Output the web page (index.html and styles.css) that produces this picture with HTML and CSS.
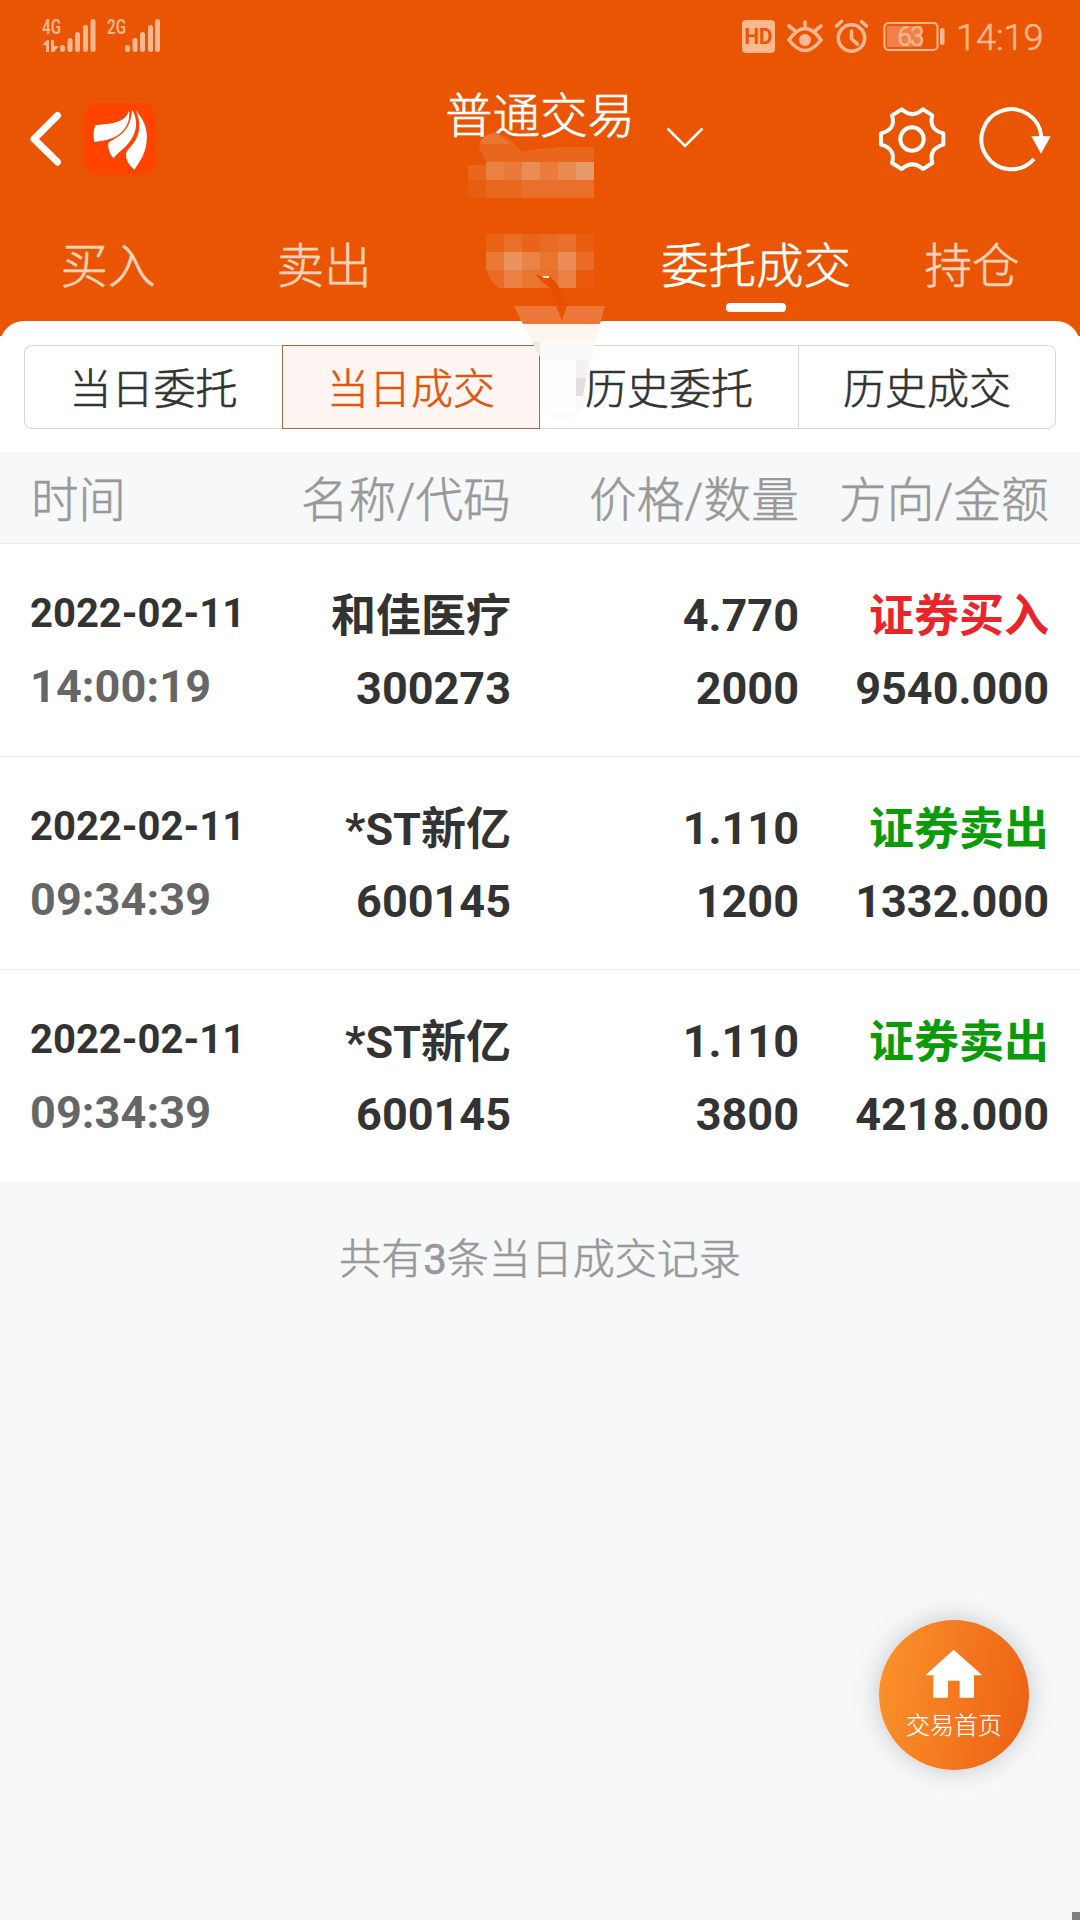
FILE: index.html
```html
<!DOCTYPE html>
<html lang="zh-CN">
<head>
    <meta charset="UTF-8">
    <meta name="viewport" content="width=device-width, initial-scale=1.0">
    <title>普通交易 - 当日成交</title>
    <link rel="stylesheet" href="styles.css">
</head>
<body>
    <header class="header">
        <!-- Status Bar -->
        <div class="status-bar">
            <svg class="signals" width="125" height="40" viewBox="40 16 125 40">
                <text x="42" y="33.5" textLength="19" lengthAdjust="spacingAndGlyphs">4G</text>
                <text x="107" y="33.5" textLength="19" lengthAdjust="spacingAndGlyphs">2G</text>
                <path d="M42 45l5-5h2v12h-3v-7zM51 40h3v6h5l-5 6h-3z"/>
                <g class="bars">
                    <path d="M62.5 47.5v2M70 40.5v9M77.5 34.5v15M85.5 27.5v22M93 21.5v28"/>
                    <path d="M127.5 47.5v2M135 40.5v9M142.5 34.5v15M150.5 27.5v22M157.5 21.5v28"/>
                </g>
            </svg>
            <div class="status-right">
                <svg width="206" height="40" viewBox="741 16 206 40">
                    <rect class="solid" x="742" y="20" width="33" height="33" rx="4"/>
                    <text class="hd" x="744.5" y="44" textLength="28" lengthAdjust="spacingAndGlyphs">HD</text>
                    <g class="line">
                        <path d="M789 40q16-23 32 0q-16 21-32 0zM805 27v-5M794 30l-5-4M816 30l5-4"/>
                        <circle cx="851.5" cy="38" r="13.2"/>
                        <path d="M851.5 31v8l6 5M836.5 26l5-4.5M861.5 21.5l5 4.5"/>
                    </g>
                    <circle class="solid" cx="805" cy="40" r="6"/>
                    <rect class="charge" x="887" y="26" width="35" height="21"/>
                    <rect class="shell" x="884.5" y="23" width="53" height="27" rx="4"/>
                    <rect class="solid" x="940" y="28" width="4.5" height="17" rx="2"/>
                    <text class="level" x="897" y="45.5" textLength="28">63</text>
                </svg>
                <span class="clock">14:19</span>
            </div>
        </div>

        <!-- Title Bar -->
        <div class="title-bar">
            <div class="title-left">
                <svg width="32" height="56" viewBox="30 111 32 56" fill="none" stroke="#fff" stroke-width="7" stroke-linecap="round" stroke-linejoin="round">
                    <path d="M57.5 115.5L34 139L57.5 162"/>
                </svg>
                <svg class="logo" width="72" height="72" viewBox="252 309 216 216">
                    <rect x="252" y="309" width="216" height="216" rx="42" fill="#ff4400"/>
                    <g fill="#fff">
                        <path d="M387 332C380 354 364 363 340 369C322 373 304 373 286 376Q277 398 283 426C310 423 336 417 354 405C380 386 391 362 387 332z"/>
                        <path d="M396 329C394 366 382 389 357 408C346 416 335 421 325 428Q322 452 340 475C350 461 363 453 376 440C407 409 420 370 396 329z"/>
                        <path d="M408 332C424 368 421 403 399 432C390 442 381 450 378 460Q376 488 403 509C418 487 430 471 437 442C448 396 434 360 408 332z"/>
                    </g>
                </svg>
            </div>
            <h1 class="title">普通交易</h1>
            <div class="title-right">
                <svg class="chevron" width="40" height="24" viewBox="664 126 40 24" fill="none" stroke="#fff" stroke-width="2.6">
                    <path d="M666.5 128.5L684 146L701.5 128.5"/>
                </svg>
                <svg width="68" height="68" viewBox="529 314 204 204" fill="none" stroke="#fff" stroke-width="12" stroke-linejoin="round">
                    <path d="M600 327Q632 356 664 327L692 345Q680 388 725 399V433Q680 446 692 488L664 506Q632 478 600 506L571 488Q584 446 538 433V399Q584 388 571 345Z"/>
                    <circle cx="631" cy="416" r="35"/>
                </svg>
                <svg width="74" height="68" viewBox="832 314 222 204">
                    <path d="M1000 476A90 90 0 1 1 1022 410" fill="none" stroke="#fff" stroke-width="12"/>
                    <path d="M992 408h58l-29 52z" fill="#fff"/>
                </svg>
            </div>
        </div>

        <!-- Main Tabs -->
        <nav class="tabs">
            <a class="tab">买入</a>
            <a class="tab">卖出</a>
            <a class="tab"></a>
            <a class="tab active">委托成交</a>
            <a class="tab">持仓</a>
        </nav>
    </header>

    <!-- Sub Tabs -->
    <section class="panel">
        <div class="segments">
            <a class="segment">当日委托</a>
            <a class="segment selected">当日成交</a>
            <a class="segment">历史委托</a>
            <a class="segment">历史成交</a>
        </div>
    </section>

    <!-- Trade Records -->
    <main class="records">
        <div class="row row-head">
            <span>时间</span>
            <span>名称/代码</span>
            <span>价格/数量</span>
            <span>方向/金额</span>
        </div>
        <div class="row">
            <div class="cell"><span class="date">2022-02-11</span><span class="time">14:00:19</span></div>
            <div class="cell"><span class="name">和佳医疗</span><span>300273</span></div>
            <div class="cell"><span>4.770</span><span>2000</span></div>
            <div class="cell"><span class="name buy">证券买入</span><span>9540.000</span></div>
        </div>
        <div class="row">
            <div class="cell"><span class="date">2022-02-11</span><span class="time">09:34:39</span></div>
            <div class="cell"><span class="name">*ST新亿</span><span>600145</span></div>
            <div class="cell"><span>1.110</span><span>1200</span></div>
            <div class="cell"><span class="name sell">证券卖出</span><span>1332.000</span></div>
        </div>
        <div class="row">
            <div class="cell"><span class="date">2022-02-11</span><span class="time">09:34:39</span></div>
            <div class="cell"><span class="name">*ST新亿</span><span>600145</span></div>
            <div class="cell"><span>1.110</span><span>3800</span></div>
            <div class="cell"><span class="name sell">证券卖出</span><span>4218.000</span></div>
        </div>
    </main>
    <p class="summary">共有<b>3</b>条当日成交记录</p>

    <!-- Masked account info -->
    <svg class="mask" width="160" height="290" viewBox="460 130 160 290" shape-rendering="crispEdges">
        <path fill="#e9661f" d="M479 147q3-14 17-14q12 2 26 19q24-6 72-5v15H486z"/>
        <path fill="#eb7535" d="M479 144q4-10 17-11l14 11z"/>
        <g>
            <rect x="468" y="165" width="18" height="15" fill="#e9661d"/>
            <rect x="486" y="162" width="18" height="18" fill="#ea8143"/>
            <rect x="504" y="162" width="18" height="18" fill="#e97a3a"/>
            <rect x="522" y="162" width="18" height="18" fill="#e98d56"/>
            <rect x="540" y="162" width="18" height="18" fill="#e97c3d"/>
            <rect x="558" y="162" width="18" height="18" fill="#e88b50"/>
            <rect x="576" y="162" width="18" height="18" fill="#e69a6a"/>
            <rect x="468" y="180" width="18" height="18" fill="#e95d12"/>
            <rect x="486" y="180" width="36" height="18" fill="#e9681f"/>
            <rect x="522" y="180" width="72" height="18" fill="#e96f2b"/>
        </g>
        <g>
            <rect x="486" y="234" width="18" height="18" fill="#e96216"/>
            <rect x="504" y="234" width="18" height="18" fill="#e97029"/>
            <rect x="522" y="234" width="18" height="18" fill="#e96418"/>
            <rect x="540" y="234" width="18" height="18" fill="#e96c24"/>
            <rect x="558" y="234" width="18" height="18" fill="#e9712c"/>
            <rect x="576" y="234" width="18" height="18" fill="#e95d12"/>
            <rect x="486" y="252" width="18" height="18" fill="#ea7935"/>
            <rect x="504" y="252" width="18" height="18" fill="#ea935c"/>
            <rect x="522" y="252" width="18" height="18" fill="#e98348"/>
            <rect x="540" y="252" width="18" height="18" fill="#e9762f"/>
            <rect x="558" y="252" width="18" height="18" fill="#ea8d58"/>
            <rect x="576" y="252" width="18" height="18" fill="#e96b26"/>
            <path d="M487 270h17v18h-5q-9-6-12-18z" fill="#e96b25"/>
            <rect x="504" y="270" width="18" height="18" fill="#ea8143"/>
            <rect x="522" y="270" width="18" height="18" fill="#e9752f"/>
            <rect x="540" y="270" width="18" height="18" fill="#e9702a"/>
            <rect x="558" y="270" width="18" height="18" fill="#ea8144"/>
            <rect x="576" y="270" width="18" height="18" fill="#e95a0c"/>
            <path d="M536 275l14 2q14 12 17 29h-9q-3-16-18-26z" fill="#e85000"/>
            <path d="M542 276h7v2h-6z" fill="#fbe0cd"/>
        </g>
        <path fill="#eb7839" d="M514 306h42l6 15l5-15h38l-5 18h-77z"/>
        <path fill="#fcf5f0" d="M523 324h77l-4 18h-64z"/>
        <path fill="#f3e7df" d="M532 342h8v15z"/>
        <path fill="#fafafa" d="M540 342h55l-10 57q-5 18-16 18h-12q-9 0-17-10z"/>
        <path fill="#fdfdfd" d="M540 360h36v52h-30l-6-6z"/>
        <path fill="#f1f1f1" d="M576 360h13l-3 18h-10z"/>
        <path fill="#e0e0e0" d="M576 378h10l-3 18h-7z"/>
    </svg>

    <!-- Floating Home Button -->
    <a class="home-button">
        <svg width="58" height="50" viewBox="254 208 174 150">
            <path d="M340 210L426 287H401V354H358V303H323V354H279V287H255Z" fill="#fff"/>
        </svg>
        <span>交易首页</span>
    </a>
    <div class="corner"></div>
</body>
</html>
```
FILE: styles.css
```css
/* Base Styles */
* {
    box-sizing: border-box;
}

body {
    margin: 0;
    position: relative;
    height: 1920px;
    overflow: hidden;
    font-family: Roboto, "Noto Sans CJK SC", sans-serif;
    font-weight: 300;
    -webkit-text-stroke: 0.6px currentColor;
    color: #333;
    background-color: #f7f8fa;
}

svg {
    display: block;
    flex: none;
}

svg text {
    -webkit-text-stroke: 0;
}

/* Header */
.header {
    height: 336px;
    background-color: #ea5504;
    color: #fff;
}

.status-bar {
    display: flex;
    justify-content: space-between;
    height: 72px;
    padding: 16px 36px 0 40px;
}

.status-bar svg {
    fill: #ffb78f;
}

.signals text {
    font-size: 20.5px;
    font-weight: 600;
}

.bars {
    stroke: #ffb78f;
    stroke-width: 5;
    stroke-linecap: round;
}

.status-right {
    display: flex;
    gap: 9px;
}

.status-bar .hd {
    fill: #ea5504;
    font-size: 22px;
    font-weight: 700;
}

.line {
    fill: none;
    stroke: #ffb78f;
    stroke-width: 3.6;
    stroke-linecap: round;
}

.charge {
    fill: #f08249;
}

.shell {
    fill: none;
    stroke: #ffb78f;
    stroke-width: 2;
}

.level {
    font-size: 27px;
    font-weight: 400;
}

.clock {
    width: 88px;
    font-size: 36px;
    line-height: 44px;
    color: #ffb78f;
    white-space: nowrap;
}

/* Title Bar */
.title-bar {
    display: grid;
    grid-template-columns: 1fr 192px 1fr;
    height: 134px;
    padding: 0 28px 0 30px;
}

.title-left,
.title-right {
    display: flex;
    align-items: center;
}

.logo {
    margin-left: 22px;
}

.title {
    margin: 10px 0 0 -2px;
    font-size: 47.5px;
    font-weight: 300;
    line-height: 70px;
    text-align: center;
}

.title-right {
    justify-content: flex-end;
    gap: 32px;
}

.chevron {
    margin: -2px 141px 0 0;
}

/* Main Tabs */
.tabs {
    display: flex;
    height: 115px;
}

.tab {
    display: flex;
    flex: 1;
    flex-direction: column;
    align-items: center;
    padding-top: 26px;
    font-size: 47.5px;
    line-height: 70px;
    color: #ffd3b8;
    white-space: nowrap;
}

.tab.active {
    color: #fff;
}

.tab.active::after {
    content: "";
    width: 60px;
    height: 9px;
    margin-top: 1px;
    border-radius: 4px;
    background-color: #fff;
}

/* Sub Tabs */
.panel {
    height: 131px;
    margin-top: -15px;
    padding: 24px 24px 0;
    border-radius: 24px 24px 0 0;
    background-color: #fff;
}

.segments {
    display: grid;
    grid-template-columns: repeat(4, 1fr);
    grid-template-rows: 84px;
}

.segment {
    border: 1px solid #d5d7d9;
    font-size: 42px;
    line-height: 87px;
    text-align: center;
}

.segment:first-child {
    border-radius: 8px 0 0 8px;
    border-right: 0;
}

.segment:last-child {
    border-radius: 0 8px 8px 0;
}

.segment:nth-child(3) {
    border-left: 0;
    border-right: 0;
}

.segment.selected {
    border-color: #a96a40;
    color: #dc5712;
    background-color: #fff6f3;
}

/* Trade Records */
.row {
    display: grid;
    grid-template-columns: 230px 250px 288px 250px;
    height: 213px;
    padding: 35px 30px 0 31px;
    border-top: 1px solid #ebebeb;
    text-align: right;
    background-color: #fff;
}

.row-head {
    height: 91px;
    padding-top: 12px;
    border-top: 0;
    font-size: 47.5px;
    line-height: 74px;
    color: #999;
    background-color: #f7f8fa;
}

.row-head > :nth-child(n+2) {
    letter-spacing: 0.2px;
}

.row > :first-child {
    text-align: left;
}

.cell {
    display: flex;
    flex-direction: column;
    font-size: 45px;
    font-weight: 700;
    line-height: 73px;
    white-space: nowrap;
    -webkit-text-stroke: 0;
}

.cell:first-child {
    margin-left: -1px;
}

.cell .name {
    line-height: 75px;
    margin-bottom: -2px;
}

.cell .date {
    font-size: 40px;
    line-height: 70px;
}

.cell .time {
    line-height: 75px;
    letter-spacing: 0.1px;
    color: #666;
}

.cell .buy {
    color: #e8262a;
}

.cell .sell {
    color: #099b09;
}

.summary {
    margin: 47px 0 0;
    font-size: 42px;
    line-height: 62px;
    text-align: center;
    color: #999;
}

.summary b {
    font-weight: 400;
}

/* Overlays */
.mask {
    position: absolute;
    top: 130px;
    left: 460px;
}

.home-button {
    position: absolute;
    top: 1620px;
    left: 879px;
    display: flex;
    flex-direction: column;
    align-items: center;
    width: 150px;
    height: 150px;
    padding-top: 29px;
    border-radius: 50%;
    font-size: 24px;
    line-height: 36px;
    color: #fff;
    background: linear-gradient(100deg, #fb942c, #ec5f13);
    box-shadow: 0 0 28px rgba(0, 0, 0, 0.2);
    -webkit-text-stroke: 0.2px currentColor;
}

.home-button span {
    margin-top: 9px;
}

.corner {
    position: absolute;
    right: 0;
    bottom: 0;
    width: 8px;
    height: 8px;
    background-color: #808080;
}
```
